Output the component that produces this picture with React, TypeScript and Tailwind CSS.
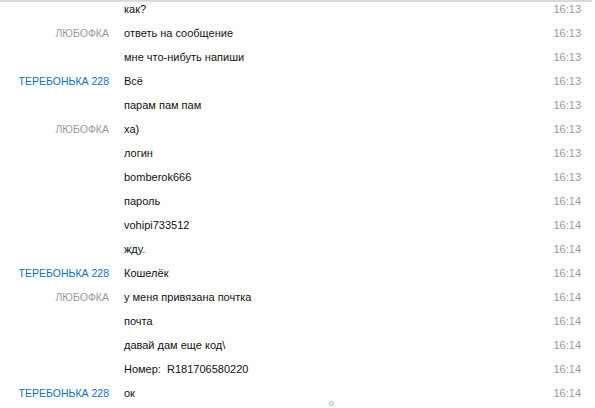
import React from "react";

type Row = { name?: string; who?: "t" | "l"; text: string; time: string };

const rows: Row[] = [
  { text: "как?", time: "16:13" },
  { name: "ЛЮБОФКА", who: "l", text: "ответь на сообщение", time: "16:13" },
  { text: "мне что-нибуть напиши", time: "16:13" },
  { name: "ТЕРЕБОНЬКА 228", who: "t", text: "Всё", time: "16:13" },
  { text: "парам пам пам", time: "16:13" },
  { name: "ЛЮБОФКА", who: "l", text: "ха)", time: "16:13" },
  { text: "логин", time: "16:13" },
  { text: "bomberok666", time: "16:13" },
  { text: "пароль", time: "16:14" },
  { text: "vohipi733512", time: "16:14" },
  { text: "жду.", time: "16:14" },
  { name: "ТЕРЕБОНЬКА 228", who: "t", text: "Кошелёк", time: "16:14" },
  { name: "ЛЮБОФКА", who: "l", text: "у меня привязана почтка", time: "16:14" },
  { text: "почта", time: "16:14" },
  { text: "давай дам еще код\\", time: "16:14" },
  { text: "Номер:  R181706580220", time: "16:14" },
  { name: "ТЕРЕБОНЬКА 228", who: "t", text: "ок", time: "16:14" },
];

export default function App() {
  return (
    <div
      className="relative w-[595px] h-[408px] overflow-hidden bg-white"
      style={{ fontFamily: '"Liberation Sans", Arial, sans-serif' }}
    >
      <div className="h-[2px] w-[592px] bg-[#dadada]" />
      <div className="-mt-[5px] flex flex-col">
        {rows.map((r, i) => (
          <div key={i} className="flex h-[24px] items-center text-[11px] leading-none">
            <div
              className={
                "w-[109px] shrink-0 text-right whitespace-nowrap text-[10.5px] " +
                (r.who === "t" ? "text-[#0a6fc4]" : "text-[#9a9a9a]")
              }
            >
              {r.name ?? ""}
            </div>
            <div className="ml-[15px] flex-1 whitespace-pre text-[#111]">{r.text}</div>
            <div className="w-[40px] shrink-0 text-[#9a9a9a] mr-[14px] text-right">{r.time}</div>
          </div>
        ))}
      </div>
      <div className="absolute left-[329px] top-[401px] h-[5px] w-[5px] rounded-full border border-[#8fc3dc]" />
    </div>
  );
}
